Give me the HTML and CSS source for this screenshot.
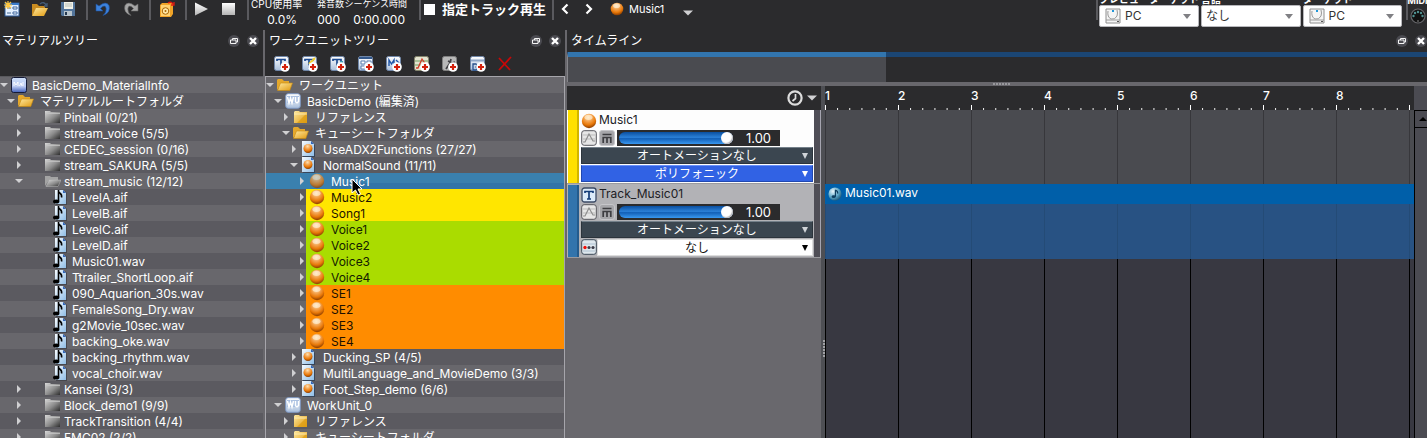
FILE: index.html
```html
<!DOCTYPE html>
<html lang="ja">
<head>
<meta charset="utf-8">
<meta name="viewport" content="width=device-width, initial-scale=1">
<title>BasicDemo</title>
<link rel="stylesheet" href="styles.css">
</head>
<body>
<svg class="defs" aria-hidden="true">
  <defs>
    <radialGradient id="gBall" cx="45%" cy="25%" r="75%"><stop offset="0" stop-color="#ffe2b4"/><stop offset=".4" stop-color="#f3a04a"/><stop offset=".7" stop-color="#e87808"/><stop offset="1" stop-color="#8a3c00"/></radialGradient>
    <linearGradient id="gFold" x2="1" y2="1"><stop offset="0" stop-color="#ffe9a0"/><stop offset="1" stop-color="#e09a10"/></linearGradient>
    <linearGradient id="gGray" x2="1" y2="1"><stop offset="0" stop-color="#d8d8d8"/><stop offset=".55" stop-color="#8b8b8b"/><stop offset="1" stop-color="#2e2e2e"/></linearGradient>
    <linearGradient id="gPage" x2="1" y2="1"><stop offset="0" stop-color="#f6fbff"/><stop offset="1" stop-color="#8fbde6"/></linearGradient>
    <linearGradient id="gTile" x2="0" y2="1"><stop offset="0" stop-color="#ffffff"/><stop offset="1" stop-color="#a9bfdc"/></linearGradient>
    <linearGradient id="gMat" x2="0" y2="1"><stop offset="0" stop-color="#cfe0fa"/><stop offset=".6" stop-color="#b9c8f0"/><stop offset="1" stop-color="#3c5cb8"/></linearGradient>
    <linearGradient id="gWhite" x2="0" y2="1"><stop offset="0" stop-color="#fff"/><stop offset="1" stop-color="#b4b4b4"/></linearGradient>
    <radialGradient id="gNote" cx="35%" cy="30%" r="75%"><stop offset="0" stop-color="#eaf7fc"/><stop offset=".6" stop-color="#5aa6c8"/><stop offset="1" stop-color="#1f5878"/></radialGradient>
    <symbol id="ball" viewBox="0 0 16 16"><circle cx="8" cy="8" r="7.2" fill="url(#gBall)"/><ellipse cx="7.500" cy="4.300" rx="4" ry="2.600" fill="#fff1d8" opacity=".65"/></symbol>
    <symbol id="fopen" viewBox="0 0 16 16"><path d="M0 13V3l1-1h4l2 2h5v3H5z" fill="#e5a82c"/><path d="M.5 13.500L3.500 6H15.500L12.800 13.500z" fill="url(#gFold)" stroke="#c8890e" stroke-width=".6"/></symbol>
    <symbol id="fclosed" viewBox="0 0 16 16"><path d="M1 3l1-1h4l1 1h7v11H1z" fill="url(#gFold)"/><path d="M14 4v10H4z" fill="#dc9b10" opacity=".7"/><path d="M1 5h13" stroke="#fff3c0" stroke-width=".8"/></symbol>
    <symbol id="gclosed" viewBox="0 0 16 16"><path d="M0 2h5l1 1h9v11H0z" fill="url(#gGray)"/><path d="M0 4.500h15" stroke="#c4c4c4" stroke-width=".8"/></symbol>
    <symbol id="gopen" viewBox="0 0 16 16"><path d="M0 13V3h5l1 1h7v3H4z" fill="#a4a4a4"/><path d="M1 13.500L4 7H16L13 13.500z" fill="url(#gGray)" stroke="#bbb" stroke-width=".5"/></symbol>
    <symbol id="wave" viewBox="0 0 16 16"><path d="M4 2h9l2 2v12H4z" fill="#47474d"/><path d="M3 1h8l3 3v11H3z" fill="url(#gPage)"/><path d="M11 1v3h3z" fill="#3266ba"/><path d="M6.500 1v11M6.500 2.500c1 2 4 2 3 6" fill="none" stroke="#000" stroke-width="1.600"/><ellipse cx="4.200" cy="12.500" rx="3.200" ry="2" fill="#000"/></symbol>
    <symbol id="sheet" viewBox="0 0 16 16"><path d="M2 1h9l3 3v12H2z" fill="#38465a"/><path d="M1 0h9l3 3v12H1z" fill="url(#gPage)"/><path d="M10 0v3h3z" fill="#3266ba"/><circle cx="7" cy="7.500" r="4.500" fill="url(#gBall)"/></symbol>
    <symbol id="wu" viewBox="0 0 16 16"><rect x=".7" y=".7" width="14.600" height="14.600" rx="2.500" fill="url(#gTile)" stroke="#7d98c4"/><path d="M2 3h12v7H2z" fill="#a9bfe0"/><path d="M2.500 4l1.500 6 1.500-5L7 10l1.500-6M10.500 4v4.500q1.200 2.500 3 0V4" fill="none" stroke="#fff" stroke-width="1.500"/></symbol>
    <symbol id="mat" viewBox="0 0 16 16"><rect x=".5" y=".5" width="15" height="15" rx="2" fill="url(#gMat)" stroke="#141a36"/><path d="M3 9V5l2 3 2-3v4M8.500 9l1.500-3 1 3M12 5v4" fill="none" stroke="#fff" stroke-width=".9"/></symbol>
    <symbol id="plus" viewBox="0 0 16 16"><circle cx="11" cy="11" r="4.800" fill="#fff"/><path d="M11 8v6M8 11h6" stroke="#d2210c" stroke-width="2.200"/></symbol>
    <symbol id="tile" viewBox="0 0 16 16"><rect x=".5" y=".5" width="14" height="14" rx="2" fill="url(#gTile)" stroke="#6f86a8"/></symbol>
    <symbol id="tt" viewBox="0 0 16 16"><path d="M3 5V3.500h8V5M7 3.500V12" fill="none" stroke="#1c4a90" stroke-width="1.700"/></symbol>
    <symbol id="curve" viewBox="0 0 16 16"><rect x=".7" y=".7" width="14.600" height="14.600" rx="2.500" fill="#e6e6e6" stroke="#55555c"/><path d="M2 5h12M2 9h12" stroke="#bbb"/><path d="M2 12h2L8 4l4 7h2" fill="none" stroke="#8e8e8e" stroke-width="1.200"/></symbol>
    <symbol id="mute" viewBox="0 0 16 16"><rect x=".5" y=".5" width="15" height="15" rx="2.500" fill="#a6a6aa" stroke="#c6c6ca"/><path d="M3.500 4.500h9M4.200 13V7.500h7.600V13M8 7.500V13" fill="none" stroke="#3d3d41" stroke-width="1.700"/></symbol>
    <symbol id="tbox" viewBox="0 0 16 16"><rect x="1" y="1" width="14" height="14" rx="2.500" fill="#dcebfa" stroke="#3c4b66" stroke-width="1.300"/><path d="M4 6V4.500h8V6M8 4.500V12M6 12h4" fill="none" stroke="#143c78" stroke-width="1.700"/></symbol>
    <symbol id="dots" viewBox="0 0 16 16"><rect x=".7" y=".7" width="14.600" height="14.600" rx="2.500" fill="#dfe8ee" stroke="#3d4a58"/><path d="M2 5h12M2 12h12" stroke="#aec2d2"/><circle cx="4" cy="8.500" r="1.700" fill="#f01008"/><circle cx="8" cy="8.500" r="1.600" fill="#3c3c48"/><circle cx="12" cy="8.500" r="1.600" fill="#3c3c48"/></symbol>
    <symbol id="disk" viewBox="0 0 16 16"><path d="M1 1h14v14H1z" fill="#f5f5f5" stroke="#8e8e8e"/><path d="M3 3q-1 6 3 8 4 1 6-3 1-3 0-6M1 12h14" fill="none" stroke="#9a9a9a"/><path d="M7 2h2v2H7z" fill="#2196d8"/><path d="M12 13.500h2" stroke="#555"/></symbol>
    <symbol id="float" viewBox="0 0 12 12"><circle cx="6" cy="6" r="6" fill="#4a4a50"/><path d="M4.500 5V3.500h5v3.500H8M2.500 5H8v3.500H2.500z" fill="none" stroke="#f4f4f4"/></symbol>
    <symbol id="close" viewBox="0 0 12 12"><circle cx="6" cy="6" r="6" fill="#4a4a50"/><path d="M3 3l6 6M9 3L3 9" stroke="#fff" stroke-width="2.400"/></symbol>
    <symbol id="down" viewBox="0 0 8 8"><path d="M0 2h8L4 6z" fill="#d0d0d2"/></symbol>
    <symbol id="right" viewBox="0 0 8 8"><path d="M2 0v8l4-4z" fill="#d0d0d2"/></symbol>
  </defs>
</svg>

<div class="app">
  <header class="toolbar">
    <div class="group g-file">
      <button class="tool" aria-label="新規"><svg viewBox="0 0 16 16"><rect x="1" y="2" width="14" height="13" fill="#e3f0ff" stroke="#2c5b98"/><path d="M1 3h14" stroke="#3d7cc8" stroke-width="2"/><path d="M3 7h4M3 12h4" stroke="#7a94b4" stroke-width="1.500"/><path d="M9 6h4v2H9zM9 11h4v2H9z" fill="#fff" stroke="#3f68a0"/><path d="M4 0v8M0 4h8M1 1l6 6M7 1L1 7" stroke="#ffc53a" stroke-width="1.200"/></svg></button>
      <button class="tool" aria-label="開く"><svg viewBox="0 0 16 16"><path d="M0 15V3h5l2 2h6v3H4z" fill="#c98c20"/><path d="M0 15L4 7H16L12 15z" fill="url(#gFold)"/><path d="M8 3q4-3 6 1M15 2v3h-3" fill="none" stroke="#455d78" stroke-width="1.300"/></svg></button>
      <button class="tool" aria-label="保存"><svg viewBox="0 0 16 16"><path d="M1 1h14v14H2l-1-1z" fill="#52749a"/><path d="M4 1h9v7H4z" fill="#f2f2e8"/><path d="M4 10h8v5H4z" fill="#b8c4cc"/><path d="M5 11h2v3H5z" fill="#24384e"/><path d="M5 3h7M5 5h7" stroke="#b8bfb8"/></svg></button>
    </div>
    <div class="group g-undo">
      <button class="tool" aria-label="元に戻す"><svg viewBox="0 0 16 16"><path d="M1 3v7h7L5.500 7.500Q10 3 11 7q1 4-3 7.500 8-3 6-10-3-5-10 .5z" fill="#3c82dc" stroke="#1d4f9c" stroke-width=".6"/></svg></button>
      <button class="tool" aria-label="やり直し"><svg viewBox="0 0 16 16"><path d="M15 3v7H8l2.500-2.500Q6 3 5 7q-1 4 3 7.500-8-3-6-10 3-5 10 .5z" fill="#a6a6a6" stroke="#686868" stroke-width=".6"/></svg></button>
    </div>
    <div class="group g-build">
      <button class="tool" aria-label="ビルド"><svg viewBox="0 0 16 16"><path d="M1 4l2-2h11v11l-2 3H1z" fill="#f0a428"/><path d="M2 4h9v11H2z" fill="#ffd271"/><circle cx="6.500" cy="10" r="3.300" fill="#ffe9a8" stroke="#a86404"/><circle cx="6.500" cy="10" r="1" fill="#a86404"/><path d="M9 2q3-2 5 1M15 1v3h-3" fill="none" stroke="#e01a10" stroke-width="1.300"/></svg></button>
    </div>
    <div class="group g-play">
      <button class="tool" aria-label="再生"><svg viewBox="0 0 16 16"><path d="M2 1.500L15 8 2 14.500z" fill="url(#gWhite)"/></svg></button>
      <button class="tool" aria-label="停止"><svg viewBox="0 0 16 16"><path d="M1 2h13v12H1z" fill="url(#gWhite)"/></svg></button>
    </div>
    <dl class="group g-stats">
      <div class="stat s-cpu"><dt>CPU使用率</dt><dd>0.0%</dd></div>
      <div class="stat s-voice"><dt>発音数</dt><dd>000</dd></div>
      <div class="stat s-time"><dt>シーケンス時間</dt><dd>0:00.000</dd></div>
    </dl>
    <label class="group g-check"><input type="checkbox">指定トラック再生</label>
    <div class="group g-nav">
      <button class="tool" aria-label="前へ"><svg viewBox="0 0 16 16"><path d="M10.500 3.500L6 8l4.500 4.500" fill="none" stroke="#fff" stroke-width="2.200"/></svg></button>
      <button class="tool" aria-label="次へ"><svg viewBox="0 0 16 16"><path d="M5.500 3.500L10 8l-4.500 4.500" fill="none" stroke="#fff" stroke-width="2.200"/></svg></button>
      <button class="cue-pick"><svg class="i14"><use href="#ball"/></svg><span>Music1</span><svg class="caret"><use href="#down"/></svg></button>
    </div>
    <div class="group g-target">
      <label class="combo"><span>プレビューターゲット</span><span class="pick disk"><svg class="i16"><use href="#disk"/></svg><select><option>PC</option></select></span></label>
      <label class="combo"><span>言語</span><span class="pick"><select><option>なし</option></select></span></label>
      <label class="combo"><span>ターゲット</span><span class="pick disk"><svg class="i16"><use href="#disk"/></svg><select><option>PC</option></select></span></label>
    </div>
    <div class="group g-midi"><span>MIDI</span><svg viewBox="0 0 16 16"><circle cx="8" cy="8" r="7" fill="#111" stroke="#66666a" stroke-width="1.200"/><g fill="#4f9090"><circle cx="3.500" cy="8" r="1.200"/><circle cx="5" cy="5" r="1.200"/><circle cx="8" cy="4" r="1.200"/><circle cx="11" cy="5" r="1.200"/><circle cx="12.500" cy="8" r="1.200"/></g><path d="M7 13h2" stroke="#888"/></svg></div>
  </header>

  <main class="docks">
    <section class="dock materials">
      <div class="dock-title"><h2>マテリアルツリー</h2><button aria-label="フロート"><svg><use href="#float"/></svg></button><button aria-label="閉じる"><svg><use href="#close"/></svg></button></div>
      <div class="dock-tools"></div>
      <ul class="tree">
        <li class="m0"><svg class="tw"><use href="#down"/></svg><svg class="ic"><use href="#mat"/></svg><span>BasicDemo_MaterialInfo</span></li>
        <li class="m1"><svg class="tw"><use href="#down"/></svg><svg class="ic"><use href="#fopen"/></svg><span>マテリアルルートフォルダ</span></li>
        <li class="m2"><svg class="tw"><use href="#right"/></svg><svg class="ic"><use href="#gclosed"/></svg><span>Pinball (0/21)</span></li>
        <li class="m2"><svg class="tw"><use href="#right"/></svg><svg class="ic"><use href="#gclosed"/></svg><span>stream_voice (5/5)</span></li>
        <li class="m2"><svg class="tw"><use href="#right"/></svg><svg class="ic"><use href="#gclosed"/></svg><span>CEDEC_session (0/16)</span></li>
        <li class="m2"><svg class="tw"><use href="#right"/></svg><svg class="ic"><use href="#gclosed"/></svg><span>stream_SAKURA (5/5)</span></li>
        <li class="m2"><svg class="tw"><use href="#down"/></svg><svg class="ic"><use href="#gopen"/></svg><span>stream_music (12/12)</span></li>
        <li class="m3"><svg class="ic"><use href="#wave"/></svg><span>LevelA.aif</span></li>
        <li class="m3"><svg class="ic"><use href="#wave"/></svg><span>LevelB.aif</span></li>
        <li class="m3"><svg class="ic"><use href="#wave"/></svg><span>LevelC.aif</span></li>
        <li class="m3"><svg class="ic"><use href="#wave"/></svg><span>LevelD.aif</span></li>
        <li class="m3"><svg class="ic"><use href="#wave"/></svg><span>Music01.wav</span></li>
        <li class="m3"><svg class="ic"><use href="#wave"/></svg><span>Ttrailer_ShortLoop.aif</span></li>
        <li class="m3"><svg class="ic"><use href="#wave"/></svg><span>090_Aquarion_30s.wav</span></li>
        <li class="m3"><svg class="ic"><use href="#wave"/></svg><span>FemaleSong_Dry.wav</span></li>
        <li class="m3"><svg class="ic"><use href="#wave"/></svg><span>g2Movie_10sec.wav</span></li>
        <li class="m3"><svg class="ic"><use href="#wave"/></svg><span>backing_oke.wav</span></li>
        <li class="m3"><svg class="ic"><use href="#wave"/></svg><span>backing_rhythm.wav</span></li>
        <li class="m3"><svg class="ic"><use href="#wave"/></svg><span>vocal_choir.wav</span></li>
        <li class="m2"><svg class="tw"><use href="#right"/></svg><svg class="ic"><use href="#gclosed"/></svg><span>Kansei (3/3)</span></li>
        <li class="m2"><svg class="tw"><use href="#right"/></svg><svg class="ic"><use href="#gclosed"/></svg><span>Block_demo1 (9/9)</span></li>
        <li class="m2"><svg class="tw"><use href="#right"/></svg><svg class="ic"><use href="#gclosed"/></svg><span>TrackTransition (4/4)</span></li>
        <li class="m2"><svg class="tw"><use href="#right"/></svg><svg class="ic"><use href="#gclosed"/></svg><span>FMC02 (2/2)</span></li>
      </ul>
    </section>

    <section class="dock workunits">
      <div class="dock-title"><h2>ワークユニットツリー</h2><button aria-label="フロート"><svg><use href="#float"/></svg></button><button aria-label="閉じる"><svg><use href="#close"/></svg></button></div>
      <div class="dock-tools">
        <button class="tool" aria-label="トラック追加"><svg viewBox="0 0 16 16"><use href="#tile"/><use href="#tt"/><use href="#plus"/></svg></button>
        <button class="tool" aria-label="トラック遷移追加"><svg viewBox="0 0 16 16"><use href="#tile"/><use href="#tt"/><path d="M7 8l6-6" stroke="#f2cf2c" stroke-width="2"/><use href="#plus"/></svg></button>
        <button class="tool" aria-label="サブトラック追加"><svg viewBox="0 0 16 16"><use href="#tile"/><use href="#tt"/><path d="M10 6h3" stroke="#3aa0b8" stroke-width="2"/><use href="#plus"/></svg></button>
        <button class="tool" aria-label="ブロック追加"><svg viewBox="0 0 16 16"><use href="#tile"/><path d="M1 2h13" stroke="#33588c" stroke-width="2"/><path d="M3 5h4v3H3zM9 5h4v3H9zM3 10h4v3H3z" fill="#fff" stroke="#5c80b0"/><use href="#plus"/></svg></button>
        <button class="tool" aria-label="マーカー追加"><svg viewBox="0 0 16 16"><use href="#tile"/><path d="M3 10V4l2.500 4L8 4v5M10 4l3 3" fill="none" stroke="#1f56a8" stroke-width="1.400"/><use href="#plus"/></svg></button>
        <button class="tool" aria-label="カーブ追加"><svg viewBox="0 0 16 16"><rect x=".5" y=".5" width="14" height="14" rx="2" fill="#e4e4d0" stroke="#84846c"/><path d="M1 5h13M1 9h13" stroke="#6fa060"/><path d="M2 12h2l4-9 4 6" fill="none" stroke="#d0402c" stroke-width="1.300"/><use href="#plus"/></svg></button>
        <button class="tool" aria-label="アクション追加"><svg viewBox="0 0 16 16"><rect x=".5" y=".5" width="14" height="14" rx="2" fill="#b8b8b8" stroke="#808080"/><path d="M4 13l4-6 1-4M6 5l4 2 3-1M8 7l2 4" fill="none" stroke="#404044" stroke-width="1.700"/><use href="#plus"/></svg></button>
        <button class="tool" aria-label="バス追加"><svg viewBox="0 0 16 16"><use href="#tile"/><path d="M1 4.500h13" stroke="#8fa7c8" stroke-width="2"/><path d="M3 14V8h3q2 1.500 0 3 2 1.500 0 3z" fill="none" stroke="#27508c" stroke-width="1.300"/><use href="#plus"/></svg></button>
        <button class="tool" aria-label="削除"><svg viewBox="0 0 16 16"><path d="M1 2l11 12M13 1L1 14" stroke="#c80808" stroke-width="1.800"/></svg></button>
      </div>
      <ul class="tree">
        <li class="w0"><svg class="tw"><use href="#down"/></svg><svg class="ic"><use href="#fopen"/></svg><span>ワークユニット</span></li>
        <li class="w1"><svg class="tw"><use href="#down"/></svg><svg class="ic"><use href="#wu"/></svg><span>BasicDemo (編集済)</span></li>
        <li class="w2"><svg class="tw"><use href="#right"/></svg><svg class="ic"><use href="#fclosed"/></svg><span>リファレンス</span></li>
        <li class="w2"><svg class="tw"><use href="#down"/></svg><svg class="ic"><use href="#fopen"/></svg><span>キューシートフォルダ</span></li>
        <li class="w3"><svg class="tw"><use href="#right"/></svg><svg class="ic"><use href="#sheet"/></svg><span>UseADX2Functions (27/27)</span></li>
        <li class="w3"><svg class="tw"><use href="#down"/></svg><svg class="ic"><use href="#sheet"/></svg><span>NormalSound (11/11)</span></li>
        <li class="w4 selected"><svg class="tw"><use href="#right"/></svg><div class="cue"><svg class="ic"><use href="#ball"/></svg><span>Music1</span></div>
          <svg class="pointer" viewBox="0 0 12 18"><path d="M1 1v14l3.500-3 2.500 5 2.500-1-2.500-5H11z" fill="#000" stroke="#fff"/></svg></li>
        <li class="w4"><svg class="tw"><use href="#right"/></svg><div class="cue yellow"><svg class="ic"><use href="#ball"/></svg><span>Music2</span></div></li>
        <li class="w4"><svg class="tw"><use href="#right"/></svg><div class="cue yellow"><svg class="ic"><use href="#ball"/></svg><span>Song1</span></div></li>
        <li class="w4"><svg class="tw"><use href="#right"/></svg><div class="cue green"><svg class="ic"><use href="#ball"/></svg><span>Voice1</span></div></li>
        <li class="w4"><svg class="tw"><use href="#right"/></svg><div class="cue green"><svg class="ic"><use href="#ball"/></svg><span>Voice2</span></div></li>
        <li class="w4"><svg class="tw"><use href="#right"/></svg><div class="cue green"><svg class="ic"><use href="#ball"/></svg><span>Voice3</span></div></li>
        <li class="w4"><svg class="tw"><use href="#right"/></svg><div class="cue green"><svg class="ic"><use href="#ball"/></svg><span>Voice4</span></div></li>
        <li class="w4"><svg class="tw"><use href="#right"/></svg><div class="cue orange"><svg class="ic"><use href="#ball"/></svg><span>SE1</span></div></li>
        <li class="w4"><svg class="tw"><use href="#right"/></svg><div class="cue orange"><svg class="ic"><use href="#ball"/></svg><span>SE2</span></div></li>
        <li class="w4"><svg class="tw"><use href="#right"/></svg><div class="cue orange"><svg class="ic"><use href="#ball"/></svg><span>SE3</span></div></li>
        <li class="w4"><svg class="tw"><use href="#right"/></svg><div class="cue orange"><svg class="ic"><use href="#ball"/></svg><span>SE4</span></div></li>
        <li class="w3"><svg class="tw"><use href="#right"/></svg><svg class="ic"><use href="#sheet"/></svg><span>Ducking_SP (4/5)</span></li>
        <li class="w3"><svg class="tw"><use href="#right"/></svg><svg class="ic"><use href="#sheet"/></svg><span>MultiLanguage_and_MovieDemo (3/3)</span></li>
        <li class="w3"><svg class="tw"><use href="#right"/></svg><svg class="ic"><use href="#sheet"/></svg><span>Foot_Step_demo (6/6)</span></li>
        <li class="w1"><svg class="tw"><use href="#down"/></svg><svg class="ic"><use href="#wu"/></svg><span>WorkUnit_0</span></li>
        <li class="w2"><svg class="tw"><use href="#right"/></svg><svg class="ic"><use href="#fclosed"/></svg><span>リファレンス</span></li>
        <li class="w2"><svg class="tw"><use href="#right"/></svg><svg class="ic"><use href="#fclosed"/></svg><span>キューシートフォルダ</span></li>
      </ul>
    </section>

    <section class="dock timeline">
      <div class="dock-title"><h2>タイムライン</h2><button aria-label="フロート"><svg><use href="#float"/></svg></button><button aria-label="閉じる"><svg><use href="#close"/></svg></button></div>
      <div class="overview"><div class="visible"></div></div>
      <div class="hsplit"><span class="grip"></span></div>
      <div class="tl-body">
        <div class="heads">
          <div class="heads-top"><svg class="i16" viewBox="0 0 16 16"><circle cx="8" cy="8" r="6.600" fill="none" stroke="#ddd" stroke-width="2.200"/><path d="M8.500 4v4.500L5.500 11" fill="none" stroke="#ddd" stroke-width="1.700"/></svg><svg class="caret"><use href="#down"/></svg></div>
          <article class="track cue-track">
            <div class="bar"></div>
            <div class="controls">
              <div class="name"><svg class="i16"><use href="#ball"/></svg><span>Music1</span></div>
              <div class="volume"><button aria-label="カーブ"><svg><use href="#curve"/></svg></button><button aria-label="ミュート"><svg><use href="#mute"/></svg></button><div class="level"><input type="range" min="0" max="100" value="100" aria-label="ボリューム"><output>1.00</output></div></div>
              <div class="choice slate"><select aria-label="オートメーション"><option>オートメーションなし</option></select></div>
              <div class="choice blue"><select aria-label="再生タイプ"><option>ポリフォニック</option></select></div>
            </div>
          </article>
          <article class="track sub-track">
            <div class="bar"></div>
            <div class="controls">
              <div class="name"><svg class="i16"><use href="#tbox"/></svg><span>Track_Music01</span></div>
              <div class="volume"><button aria-label="カーブ"><svg><use href="#curve"/></svg></button><button aria-label="ミュート"><svg><use href="#mute"/></svg></button><div class="level"><input type="range" min="0" max="100" value="100" aria-label="ボリューム"><output>1.00</output></div></div>
              <div class="choice slate"><select aria-label="オートメーション"><option>オートメーションなし</option></select></div>
              <div class="choice light"><svg class="i16"><use href="#dots"/></svg><select aria-label="バス"><option>なし</option></select></div>
            </div>
          </article>
        </div>
        <div class="vsplit"><span class="grip"></span></div>
        <div class="lanes">
          <div class="ruler"><span>1</span><span>2</span><span>3</span><span>4</span><span>5</span><span>6</span><span>7</span><span>8</span><span></span></div>
          <div class="lane cue-lane"></div>
          <div class="lane clip"><div class="clip-title"><svg class="i14" viewBox="0 0 16 16"><circle cx="8" cy="8" r="7.500" fill="url(#gNote)"/><path d="M8.500 3v8M8.500 3.500q3 1 2.500 4" fill="none" stroke="#0e3f60" stroke-width="1.400"/><ellipse cx="6.500" cy="11" rx="2.400" ry="1.700" fill="#0e3f60"/></svg><span>Music01.wav</span></div></div>
          <div class="lane rest"></div>
        </div>
        <div class="scroll"><button aria-label="上へスクロール"><svg viewBox="0 0 8 8"><path d="M0 6h8L4 2z" fill="#000"/></svg></button></div>
      </div>
    </section>
  </main>
</div>
</body>
</html>
```
FILE: styles.css
```css
:root {
  --dark: #2b2b2d;
  --mid: #4a4b50;
  --line: #68676c;
  --beat: 73px;
}
* { box-sizing: border-box; }
body {
  margin: 0;
  background: var(--dark);
  color: #fff;
  font: 12px/16px Inter, "Noto Sans CJK JP", sans-serif;
}
ul, dl, dd, h2 { margin: 0; padding: 0; list-style: none; }
button, select, input { font: inherit; color: inherit; margin: 0; }
button { padding: 0; border: 0; background: none; display: flex; align-items: center; }
svg { display: block; flex: none; }
.defs { position: absolute; width: 0; height: 0; }
.i14 { width: 14px; height: 14px; }
.i16 { width: 16px; height: 16px; }
.caret { width: 10px; height: 10px; }

.app { display: flex; flex-direction: column; height: 100vh; overflow: hidden; }

/* Toolbar */
.toolbar { display: flex; height: 30px; overflow: hidden; flex: none; }
.group { display: flex; height: 20px; flex: none; border-right: 2px solid #5a5a5e; }
.tool { width: 16px; height: 16px; }
.tool svg { width: 16px; height: 16px; }
.g-file { width: 88px; padding: 1px 0 0 4px; gap: 12px; }
.g-undo { width: 63px; padding: 1px 0 0 7px; gap: 12px; }
.g-build { width: 36px; padding: 1px 0 0 8px; }
.g-play { width: 62px; padding: 1px 0 0 6px; gap: 12px; }
.g-stats { width: 172px; padding-left: 2px; }
.stat { display: flex; flex-direction: column; justify-content: flex-end; height: 28px; text-align: right; flex: none; white-space: nowrap; }
.stat dt { font-size: 9px; line-height: 16px; height: 18px; }
.stat dd { font-size: 12px; line-height: 16px; height: 16px; }
.s-cpu { width: 46px; }
.s-cpu dt { font-size: 10px; }
.s-voice { width: 47px; }
.s-voice dd { padding-right: 4px; }
.s-time { width: 63px; }
.s-time dd { padding-right: 2px; }
.g-check { width: 133px; padding-left: 3px; gap: 7px; font-weight: 700; font-size: 13px; line-height: 19px; }
.g-check input { appearance: none; width: 11px; height: 11px; margin-top: 4px; background: #fff; }
.g-nav { flex: 1; padding: 1px 0 0 3px; gap: 8px; min-width: 0; }
.cue-pick { height: 16px; gap: 5px; margin-left: 5px; font-size: 11px; }
.cue-pick .caret { margin: 8px 0 0 14px; }
.g-target { gap: 2px; width: 310px; padding: 0 4px 0 1px; }
.combo { display: flex; flex-direction: column; justify-content: flex-end; height: 27px; flex: 1; font-size: 10px; }
.combo > span:first-child { line-height: 12px; height: 12px; flex: none; white-space: nowrap; font-weight: 700; }
.pick { display: flex; align-items: center; position: relative; height: 22px; flex: none; background: #fff; border: 1px solid #b8b8bc; border-radius: 2px; color: #333; font-size: 12px; }
.pick select { appearance: none; flex: 1; min-width: 0; border: 0; background: none; padding: 0 4px; }
.pick.disk { padding-left: 5px; }
.pick::after { content: ""; position: absolute; right: 7px; top: 8px; border: 4px solid transparent; border-top: 5px solid #808084; border-bottom: 0; }
.g-midi { flex-direction: column; justify-content: flex-end; align-items: center; width: 19px; height: 24px; border: 0; font-size: 9px; font-weight: 700; }
.g-midi span { line-height: 14px; height: 14px; }
.g-midi svg { width: 16px; height: 16px; }

/* Docks */
.docks { display: flex; flex: 1; min-height: 0; }
.dock { display: flex; flex-direction: column; min-width: 0; border-right: 2px solid var(--line); }
.materials { flex: 0 0 265px; }
.workunits { flex: 0 0 302px; }
.timeline { flex: 1; border: 0; }
.dock-title { display: flex; align-items: center; height: 22px; padding: 0 4px 0 2px; gap: 7px; flex: none; }
.workunits .dock-title { padding-left: 4px; }
.timeline .dock-title { padding: 0 0 0 4px; }
.dock-title h2 { flex: 1; font-size: 12px; font-weight: 400; line-height: 20px; }
.dock-title svg { width: 12px; height: 12px; }
.dock-tools { display: flex; gap: 12px; height: 24px; padding: 4px 0 0 9px; flex: none; }

/* Trees */
.tree { flex: 1; min-height: 0; overflow: hidden; border-top: 1px solid #59595d; }
.workunits .tree { border: 1px solid #a6a5ab; border-bottom: 0; }
.tree li { display: flex; align-items: center; position: relative; height: 16px; background: #68676c; white-space: nowrap; line-height: 18px; }
.tree li:nth-child(even) { background: #5b5a60; }
.tree span { height: 16px; }
.tw { width: 8px; height: 8px; margin-right: 3px; }
.ic { width: 16px; height: 16px; margin-right: 6px; }
.m0 .ic { margin-right: 5px; }
.m1 { padding-left: 7px; }
.m2 { padding-left: 15px; }
.m2 .tw { margin-right: 22px; }
.m2 .ic { margin-right: 3px; }
.m3 { padding-left: 52px; }
.m3 .ic { margin-right: 4px; }
.w1 { padding-left: 8px; }
.w2 { padding-left: 16px; }
.w3 { padding-left: 24px; }
.w4 { padding-left: 32px; }
.w4 .tw { margin-right: 0; }
.cue { display: flex; align-items: center; flex: 1; height: 16px; padding-left: 3px; }
.yellow { background: #ffe600; color: #1c1400; }
.green { background: #aadc00; color: #142000; }
.orange { background: #ff8c00; color: #201000; }
.tree li.selected { background: #3a80ae; }
.selected .ic { opacity: .75; }
.selected .cue span { flex: 1; background: linear-gradient(#3a80ae 60%, #3274a8 60%); }
.pointer { position: absolute; left: 85px; top: 5px; width: 12px; height: 18px; z-index: 2; }

/* Timeline */
.overview { height: 30px; flex: none; border-top: 5px solid #1b4674; border-left: 1px solid #85858a; }
.visible { width: 37%; height: 30px; margin-top: -5px; border-top: 5px solid #3275ae; background: var(--mid); }
.hsplit { display: flex; justify-content: center; height: 4px; flex: none; background: var(--line); padding-left: 9px; }
.hsplit .grip { width: 18px; height: 2px; margin-top: 1px; background: repeating-linear-gradient(90deg, #98989c 0 2px, transparent 2px 3px); }
.tl-body { display: flex; flex: 1; min-height: 0; }
.heads { flex: 0 0 254px; background: #69686d; }
.heads-top { display: flex; align-items: center; justify-content: flex-end; gap: 4px; height: 24px; padding-right: 4px; background: var(--dark); }
.track { display: flex; height: 74px; border-right: 1px solid #a6a5b0; border-bottom: 1px solid #9a9a9e; padding-left: 1px; background: #fdfdfd; }
.bar { width: 11px; flex: none; background: #ffe000; border-right: 2px solid #d0b400; }
.sub-track { background: #b2b2b6; }
.sub-track .bar { background: #3274ac; border-color: #245b8c; margin-top: 1px; }
.controls { flex: 1; min-width: 0; border-right: 6px solid #4f4e56; padding: 1px 1px 0 2px; color: #202024; }
.name { display: flex; align-items: center; height: 19px; gap: 2px; line-height: 14px; }
.name span { height: 16px; }
.volume { display: flex; height: 17px; gap: 2px; }
.volume button, .volume svg { width: 16px; height: 16px; }
.level { display: flex; align-items: center; width: 163px; height: 16px; background: var(--dark); color: #fff; padding-left: 2px; }
.level output { flex: 1; text-align: center; font-size: 13px; padding-left: 4px; }
.level input { appearance: none; width: 114px; height: 12px; border-radius: 6px; background: linear-gradient(#0a4fa0, #2b80d8 45%, #1260b8 55%, #3a98f0); }
.level input::-webkit-slider-thumb { appearance: none; width: 12px; height: 12px; border-radius: 50%; background: #fff; box-shadow: inset -1px -1px 1px #b4b4b8; }
.choice { position: relative; display: flex; height: 17px; margin-bottom: 1px; }
.choice select { appearance: none; width: 100%; border: 1px solid #2c343c; border-top-color: #74808a; border-radius: 0; padding: 0; line-height: 15px; text-align: center; text-align-last: center; color: #fff; background: #3b4650; }
.choice::after { content: ""; position: absolute; right: 5px; top: 6px; border: 3px solid transparent; border-top: 6px solid #d0d4d8; border-bottom: 0; }
.blue select { background: #3162e4; border-color: #2148b0; border-top-color: #6890f8; }
.blue::after { border-top-color: #fff; }
.light select { background: #fff; color: #111; border-color: #ddd; padding-right: 16px; }
.light::after { border-top-color: #000; }
.vsplit { display: flex; align-items: center; justify-content: flex-end; width: 4px; flex: none; background: #4e4f54; padding-top: 174px; }
.vsplit .grip { width: 2px; height: 18px; background: repeating-linear-gradient(#a0a0a4 0 2px, transparent 2px 3px); }
.lanes { display: flex; flex-direction: column; flex: 1; min-width: 0; }
.ruler { display: flex; height: 24px; overflow: hidden; flex: none; font-weight: 500; }
.ruler span {
  flex: 0 0 var(--beat);
  height: 24px;
  line-height: 20px;
  background:
    linear-gradient(#fff, #fff) 0 100% / 1px 5px no-repeat,
    linear-gradient(90deg, #fff 1px, transparent 1px) 0 100% / calc(100% / 6) 2px repeat-x;
}
.lane { --grid: #37373b; background: repeating-linear-gradient(90deg, var(--grid) 0 1px, transparent 1px var(--beat)) var(--fill); }
.cue-lane { --fill: var(--mid); height: 74px; flex: none; }
.clip { --fill: #285283; --grid: #244b76; height: 75px; flex: none; }
.rest { --fill: #383841; --grid: #000; flex: 1; }
.clip-title { display: flex; align-items: center; gap: 3px; height: 20px; padding-left: 3px; background: #005fa9; }
.clip-title span { height: 18px; }
.scroll { width: 13px; flex: none; background: #4b4b52; padding-top: 24px; display: flex; flex-direction: column; }
.scroll::after { content: ""; flex: 1; border-left: 1px solid #000; }
.scroll button { height: 18px; border: 1px solid #000; border-right: 0; padding-left: 4px; }
.scroll svg { width: 8px; height: 8px; }
```
